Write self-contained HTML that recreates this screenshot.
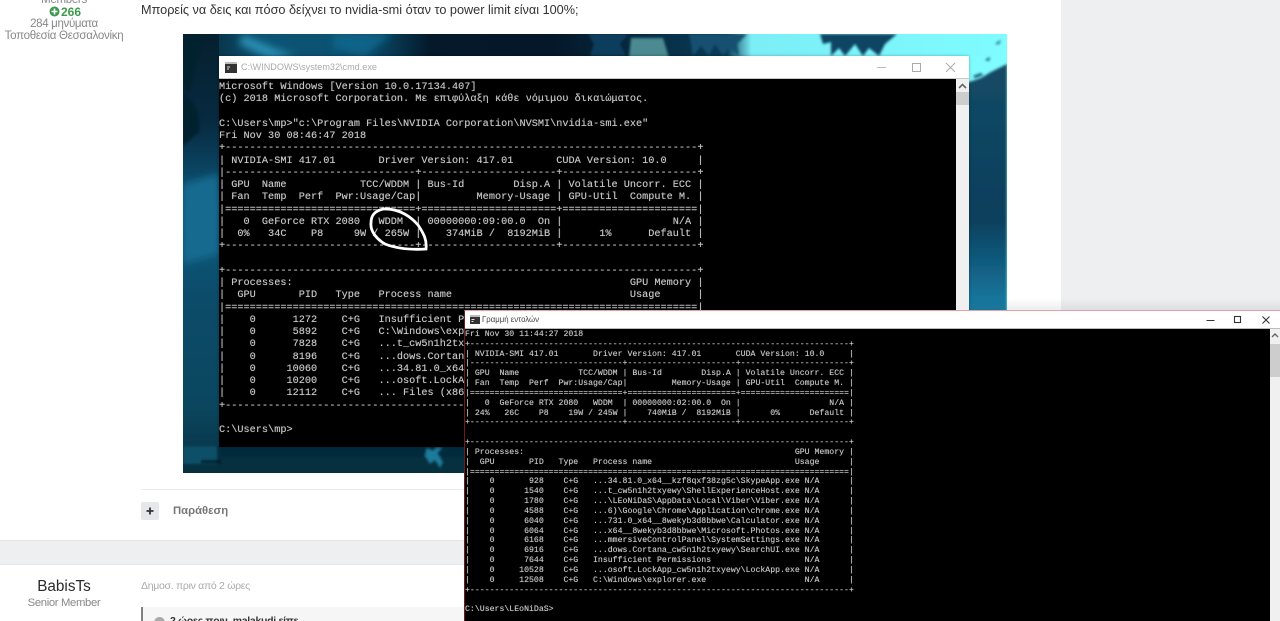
<!DOCTYPE html>
<html lang="el">
<head>
<meta charset="utf-8">
<title>Post</title>
<style>
html,body{margin:0;padding:0;width:1280px;height:621px;overflow:hidden;background:#fff}
body{font-family:"Liberation Sans",sans-serif;position:relative}
.a{position:absolute}
.t{white-space:nowrap}
.c{text-align:center;left:0;width:128px}
pre{margin:0;position:absolute;font-family:"Liberation Mono","DejaVu Sans Mono",monospace;color:#c8c8c8;white-space:pre;text-shadow:0 0 .6px rgba(200,200,200,.7)}
</style>
</head>
<body>
<div class="a" style="left:1061px;top:0;width:219px;height:621px;background:#eeeff1"></div>
<div class="a" style="left:0;top:540px;width:1061px;height:25px;background:#eeeff1;border-top:1px solid #e2e2e2;border-bottom:1px solid #e8e8e8;box-sizing:border-box"></div>

<div class="a t c" style="top:-7px;font-size:11.5px;letter-spacing:-.3px;line-height:14px;color:#888">Members</div>
<div class="a t" style="left:49px;top:5px;width:32px;height:14px">
  <svg width="11" height="11" viewBox="0 0 11 11" style="position:absolute;left:0;top:1px"><circle cx="5.5" cy="5.5" r="5" fill="#3d9a4c"/><path d="M5.5 2.5v6M2.500 5.500h6" stroke="#fff" stroke-width="1.6"/></svg>
  <span style="position:absolute;left:12px;top:0;font-size:12px;font-weight:bold;line-height:14px;color:#3d9a4c">266</span>
</div>
<div class="a t c" style="top:17px;font-size:11.5px;letter-spacing:-.33px;line-height:14px;color:#888">284 μηνύματα</div>
<div class="a t c" style="top:29px;font-size:11.5px;letter-spacing:-.28px;line-height:14px;color:#888">Τοποθεσία Θεσσαλονίκη</div>

<div class="a t" style="left:141px;top:3px;font-size:12.7px;line-height:15px;color:#333">Μπορείς να δεις και πόσο δείχνει το nvidia-smi όταν το power limit είναι 100%;</div>

<!-- wallpaper -->
<svg class="a" style="left:183px;top:34px" width="824" height="439" viewBox="0 0 824 439">
  <defs>
    <linearGradient id="g" x1="0" x2="1" y1="0" y2="0">
      <stop offset="0" stop-color="#05202f"/><stop offset=".1" stop-color="#0c5474"/><stop offset=".22" stop-color="#0b5070"/><stop offset=".3" stop-color="#04192a"/><stop offset=".45" stop-color="#04182a"/><stop offset=".66" stop-color="#0a3c58"/><stop offset=".69" stop-color="#7ceef6"/><stop offset="1" stop-color="#7efcff"/>
    </linearGradient>
    <linearGradient id="l" x1="0" x2="0" y1="0" y2="1">
      <stop offset="0" stop-color="#05202f"/><stop offset=".2" stop-color="#072a40"/><stop offset=".4" stop-color="#0d5a7e"/><stop offset=".6" stop-color="#0c4c6a"/><stop offset=".85" stop-color="#0a465e"/><stop offset="1" stop-color="#083044"/>
    </linearGradient>
    <linearGradient id="r" x1="0" x2="0" y1="0" y2="1">
      <stop offset="0" stop-color="#134a66"/><stop offset=".55" stop-color="#0c3f5c"/><stop offset=".8" stop-color="#146e94"/><stop offset="1" stop-color="#2a9ac4"/>
    </linearGradient>
    <filter id="b"><feGaussianBlur stdDeviation="1.200"/></filter>
    <filter id="b2"><feGaussianBlur stdDeviation="4"/></filter>
  </defs>
  <rect width="824" height="40" fill="url(#g)"/>
  <rect y="0" width="36" height="439" fill="url(#l)"/>
  <rect x="770" y="22" width="54" height="290" fill="#7efcff"/>
  <rect y="412" width="290" height="27" fill="#07303f"/>
  <g filter="url(#b2)">
    <path d="M60 0l30 14 22 8-26 2-30-14z" fill="#2a90b4"/>
    <path d="M150 0h60l-30 22-30-8z" fill="#0f6488"/>
    <path d="M0 150l36-10v80l-36 10z" fill="#126a90"/>
  </g>
  <g filter="url(#b)">
    <path d="M786 48l12-4 10-6 16-8v282h-54v-250z" fill="url(#r)"/>
    <path d="M0 60q18 10 16 38l-16 14zM4 0h16L6 60 0 50z" fill="#04202f"/>
    <path d="M405 0h40l-8 10 6 12h-36l4-12z" fill="#0e3e5c"/>
    <path d="M448 4l32 0 6 20h-40z" fill="#4b8a90"/>
    <path d="M506 0h58l-10 10 2 12-10-8-6 8-8-12-6 12-8-10-8 10-2-12z" fill="#125070"/>
    <path d="M637 0h77l-12 10-6 12-10-8-6 8-8-12-10 12-6-8-8 8 0-14-8 2z" fill="#0e4464"/>
    <path d="M790 42l8-3 2 2-8 3zM760 32l6 2-3 2zM802 26l5-3-1 4zM812 10l6-4-2 4z" fill="#124a68"/>
    <path d="M36 413h250v10H36z" fill="#052c3e"/>
    <path d="M244 414l-2 8 5 8 5-4 5 8 3-6-6-9 5-5-5-1-4 4z" fill="#1f7c9c"/>
    <path d="M0 412h34v18H0z" fill="#0c5068"/>
    <path d="M18 426h20v3H18z" fill="#021824"/>
  </g>
</svg>

<!-- first console -->
<div class="a" style="left:219px;top:56px;width:750px;height:391px;background:#000;box-shadow:0 0 3px rgba(0,0,0,.3);overflow:hidden">
  <div class="a" style="left:0;top:0;width:750px;height:23px;background:#fff;border-bottom:1px solid #c8c8c8;box-sizing:border-box"></div>
  <div class="a" style="left:737px;top:23px;width:13px;height:368px;background:#f0f0f0"></div>
  <div class="a" style="left:737px;top:36px;width:13px;height:13px;background:#cdcdcd"></div>
  <svg class="a" style="left:739px;top:27px" width="9" height="7"><path d="M1 5l3.500-3.500L8 5" fill="none" stroke="#666" stroke-width="1.600"/></svg>
  <svg class="a" style="left:6px;top:6px" width="12" height="11"><rect width="12" height="11" fill="#333"/><rect y="0" width="12" height="2" fill="#bbb"/><path d="M2 5h3M2 7h2" stroke="#ddd" stroke-width="1"/></svg>
  <div class="a t" style="left:22px;top:5px;font-size:9.100px;line-height:12px;color:#aaa">C:\WINDOWS\system32\cmd.exe</div>
  <svg class="a" style="left:655px;top:4px" width="90" height="14"><path d="M3 7.500h9" stroke="#bbb" stroke-width="1"/><rect x="38.500" y="3.500" width="8" height="8" fill="none" stroke="#aaa"/><path d="M72 3l9 9M81 3l-9 9" stroke="#aaa" stroke-width="1"/></svg>
</div>
<div class="a" style="left:219px;top:81px;width:737px;height:366px;overflow:hidden">
<pre style="left:0;top:0;font-size:10.23px;line-height:12.25px;filter:blur(.35px)">Microsoft Windows [Version 10.0.17134.407]
(c) 2018 Microsoft Corporation. Με επιφύλαξη κάθε νόμιμου δικαιώματος.

C:\Users\mp&gt;"c:\Program Files\NVIDIA Corporation\NVSMI\nvidia-smi.exe"
Fri Nov 30 08:46:47 2018
+-----------------------------------------------------------------------------+
| NVIDIA-SMI 417.01       Driver Version: 417.01       CUDA Version: 10.0     |
|-------------------------------+----------------------+----------------------+
| GPU  Name            TCC/WDDM | Bus-Id        Disp.A | Volatile Uncorr. ECC |
| Fan  Temp  Perf  Pwr:Usage/Cap|         Memory-Usage | GPU-Util  Compute M. |
|===============================+======================+======================|
|   0  GeForce RTX 2080   WDDM  | 00000000:09:00.0  On |                  N/A |
|  0%   34C    P8     9W / 265W |    374MiB /  8192MiB |      1%      Default |
+-------------------------------+----------------------+----------------------+

+-----------------------------------------------------------------------------+
| Processes:                                                       GPU Memory |
|  GPU       PID   Type   Process name                             Usage      |
|=============================================================================|
|    0      1272    C+G   Insufficient Permissions                   N/A      |
|    0      5892    C+G   C:\Windows\explorer.exe                    N/A      |
|    0      7828    C+G   ...t_cw5n1h2txyewy\ShellExperienceHost.exe N/A      |
|    0      8196    C+G   ...dows.Cortana_cw5n1h2txyewy\SearchUI.exe N/A      |
|    0     10060    C+G   ...34.81.0_x64__kzf8qxf38zg5c\SkypeApp.exe N/A      |
|    0     10200    C+G   ...osoft.LockApp_cw5n1h2txyewy\LockApp.exe N/A      |
|    0     12112    C+G   ... Files (x86)\Google\Chrome\chrome.exe   N/A      |
+-----------------------------------------------------------------------------+

C:\Users\mp&gt;</pre>
</div>
<!-- hand drawn circle -->
<svg class="a" style="left:360px;top:200px" width="80" height="60" viewBox="360 200 80 60"><path d="M383 209C375 211 371 215 371 223C370 232 378 240 385 244C395 248 410 250 426 249C427 240 424 234 418 225C412 218 400 208 383 209" fill="none" stroke="#fff" stroke-width="2.800" stroke-linecap="round"/></svg>

<!-- footer of post -->
<div class="a" style="left:141px;top:489px;width:323px;height:1px;background:#ececec"></div>
<div class="a" style="left:141px;top:502px;width:18px;height:18px;background:#e6e7e8;border-radius:2px"></div>
<svg class="a" style="left:141px;top:502px" width="18" height="18"><path d="M9 5.500v7M5.500 9h7" stroke="#333" stroke-width="1.800"/></svg>
<div class="a t" style="left:173px;top:504px;font-size:11.3px;font-weight:bold;line-height:14px;color:#777">Παράθεση</div>

<div class="a t c" style="top:578px;font-size:15.3px;line-height:18px;color:#2a2a2a">BabisTs</div>
<div class="a t c" style="top:596px;font-size:11.3px;letter-spacing:-.35px;line-height:14px;color:#888">Senior Member</div>
<div class="a t" style="left:141px;top:579px;font-size:10.5px;letter-spacing:-.3px;line-height:14px;color:#aaa">Δημοσ. πριν από 2 ώρες</div>

<div class="a" style="left:141px;top:607px;width:323px;height:14px;background:#f6f6f7;border-left:2px solid #808080;box-sizing:border-box;overflow:hidden">
  <div class="a" style="left:11px;top:10px;width:11px;height:11px;border-radius:50%;background:#aaa"></div>
  <div class="a t" style="left:27px;top:7px;font-size:10.5px;letter-spacing:-.3px;font-weight:bold;line-height:14px;color:#333">2 ώρες πριν, malakudi είπε</div>
</div>

<!-- shadow above second window -->
<div class="a" style="left:969px;top:298px;width:311px;height:12px;background:linear-gradient(to bottom,rgba(0,0,0,0),rgba(0,0,0,.07))"></div>

<!-- second console -->
<div class="a" style="left:464px;top:310px;width:816px;height:311px;background:#000;border-top:1px solid #e4a0a8;border-left:1px solid #6e1a20;box-sizing:border-box;overflow:hidden">
  <div class="a" style="left:0;top:0;width:815px;height:18px;background:#fff;border-bottom:1px solid #bbb;box-sizing:border-box"></div>
  <div class="a" style="left:805px;top:18px;width:11px;height:292px;background:#f0f0f0"></div>
  <div class="a" style="left:805px;top:33px;width:10px;height:33px;background:#cdcdcd"></div>
  <svg class="a" style="left:805px;top:21px" width="10" height="7"><path d="M2 5l3-3 3 3" fill="none" stroke="#666" stroke-width="1.400"/></svg>
  <svg class="a" style="left:5px;top:4px" width="10" height="9"><rect width="10" height="9" fill="#333"/><rect width="10" height="2" fill="#bbb"/><path d="M1.500 4.500h3M1.500 6.500h2" stroke="#ddd" stroke-width="1"/></svg>
  <div class="a t" style="left:17px;top:3px;font-size:7.800px;line-height:11px;color:#444">Γραμμή εντολών</div>
  <svg class="a" style="left:735px;top:1px" width="80" height="16"><path d="M6.500 8.500h8" stroke="#333" stroke-width="1"/><rect x="34.500" y="4.500" width="6" height="6" fill="none" stroke="#333" stroke-width="1.100"/><path d="M62.500 4.500l7 7M69.500 4.500l-7 7" stroke="#333" stroke-width="1.100"/></svg>
</div>
<div class="a" style="left:465px;top:330px;width:804px;height:291px;overflow:hidden">
<pre style="left:0;top:0;font-size:8.21px;line-height:9.83px;filter:blur(.3px)">Fri Nov 30 11:44:27 2018
+-----------------------------------------------------------------------------+
| NVIDIA-SMI 417.01       Driver Version: 417.01       CUDA Version: 10.0     |
|-------------------------------+----------------------+----------------------+
| GPU  Name            TCC/WDDM | Bus-Id        Disp.A | Volatile Uncorr. ECC |
| Fan  Temp  Perf  Pwr:Usage/Cap|         Memory-Usage | GPU-Util  Compute M. |
|===============================+======================+======================|
|   0  GeForce RTX 2080   WDDM  | 00000000:02:00.0  On |                  N/A |
| 24%   26C    P8    19W / 245W |    740MiB /  8192MiB |      0%      Default |
+-------------------------------+----------------------+----------------------+

+-----------------------------------------------------------------------------+
| Processes:                                                       GPU Memory |
|  GPU       PID   Type   Process name                             Usage      |
|=============================================================================|
|    0       928    C+G   ...34.81.0_x64__kzf8qxf38zg5c\SkypeApp.exe N/A      |
|    0      1540    C+G   ...t_cw5n1h2txyewy\ShellExperienceHost.exe N/A      |
|    0      1780    C+G   ...\LEoNiDaS\AppData\Local\Viber\Viber.exe N/A      |
|    0      4588    C+G   ...6)\Google\Chrome\Application\chrome.exe N/A      |
|    0      6040    C+G   ...731.0_x64__8wekyb3d8bbwe\Calculator.exe N/A      |
|    0      6064    C+G   ...x64__8wekyb3d8bbwe\Microsoft.Photos.exe N/A      |
|    0      6168    C+G   ...mmersiveControlPanel\SystemSettings.exe N/A      |
|    0      6916    C+G   ...dows.Cortana_cw5n1h2txyewy\SearchUI.exe N/A      |
|    0      7644    C+G   Insufficient Permissions                   N/A      |
|    0     10528    C+G   ...osoft.LockApp_cw5n1h2txyewy\LockApp.exe N/A      |
|    0     12508    C+G   C:\Windows\explorer.exe                    N/A      |
+-----------------------------------------------------------------------------+

C:\Users\LEoNiDaS&gt;</pre>
</div>
</body>
</html>
